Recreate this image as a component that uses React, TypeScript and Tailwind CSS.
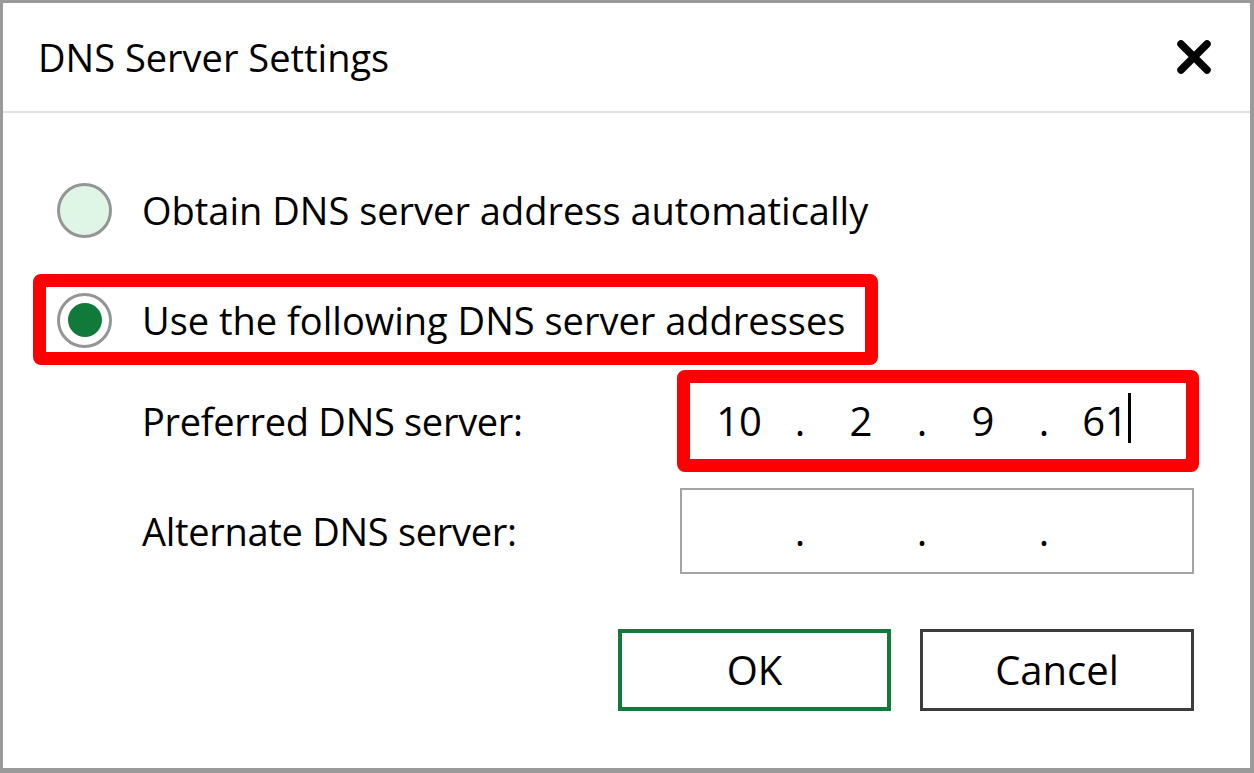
import React from "react";

const font = { fontFamily: '"Open Sans", "Noto Sans", "Liberation Sans", sans-serif' };

function Radio({ checked }: { checked: boolean }) {
  return (
    <div
      className={`w-[55px] h-[55px] rounded-full border-[3px] border-[#959595] flex items-center justify-center shrink-0 ${
        checked ? "bg-white" : "bg-[#dff5e6]"
      }`}
    >
      {checked && <div className="w-[34px] h-[34px] rounded-full bg-[#117a3a]" />}
    </div>
  );
}

function IpField({ parts }: { parts: string[] }) {
  return (
    <div className="w-[514px] h-[86px] border-2 border-[#a3a3a3] bg-white flex items-center pl-[7px] text-[40px] leading-none text-black">
      {parts.map((p, i) => (
        <React.Fragment key={i}>
          <div className="w-[100px] text-center">{p}</div>
          {i < 3 && <div className="w-[22px] text-center">.</div>}
        </React.Fragment>
      ))}
    </div>
  );
}

export default function App() {
  return (
    <div
      className="w-[1254px] h-[773px] bg-white border-l-[3px] border-t-[3px] border-r-[4px] border-b-[5px] border-[#9a9a9a] flex flex-col text-black"
      style={font}
    >
      {/* title bar */}
      <div className="h-[110px] flex items-center justify-between pl-[35px] pr-[38px] border-b-2 border-[#e2e2e2]">
        <span className="text-[38px] leading-none">DNS Server Settings</span>
        <svg width="36" height="36" viewBox="0 0 36 36">
          <path d="M5 5 L31 31 M31 5 L5 31" stroke="#000" strokeWidth="7.5" strokeLinecap="round" />
        </svg>
      </div>

      {/* body */}
      <div className="flex flex-col">
        <div className="mt-[69px] h-[56px] flex items-center pl-[54px] gap-[30px]">
          <Radio checked={false} />
          <span className="text-[38px] leading-none">Obtain DNS server address automatically</span>
        </div>

        <div className="relative mt-[54px] h-[56px] flex items-center pl-[54px] gap-[30px]">
          <Radio checked />
          <span className="text-[38px] leading-none">Use the following DNS server addresses</span>
          <div className="absolute left-[30px] top-[-18px] w-[845px] h-[91px] border-[13px] border-[#ff0000] rounded-[8px] pointer-events-none" />
        </div>

        <div className="relative mt-[30px] h-[86px] flex items-center">
          <div className="w-[677px] pl-[139px] text-[38px] leading-none tracking-[-0.3px]">Preferred DNS server:</div>
          <div className="relative">
            <IpField parts={["10", "2", "9", "61"]} />
            <div className="absolute left-[448px] top-[15px] w-[3px] h-[50px] bg-black" />
            <div className="absolute left-[-3px] top-[-8px] w-[522px] h-[102px] border-[13px] border-[#ff0000] rounded-[8px] pointer-events-none" />
          </div>
        </div>

        <div className="mt-[24px] h-[86px] flex items-center">
          <div className="w-[677px] pl-[139px] text-[38px] leading-none tracking-[-0.3px]">Alternate DNS server:</div>
          <IpField parts={["", "", "", ""]} />
        </div>

        <div className="mt-[55px] flex justify-end pr-[56px] gap-[29px]">
          <button className="w-[273px] h-[82px] border-[4px] border-[#117a3a] bg-white text-[40px] leading-none">
            OK
          </button>
          <button className="w-[274px] h-[82px] border-[3px] border-[#3c3c3c] bg-white text-[40px] leading-none">
            Cancel
          </button>
        </div>
      </div>
    </div>
  );
}
